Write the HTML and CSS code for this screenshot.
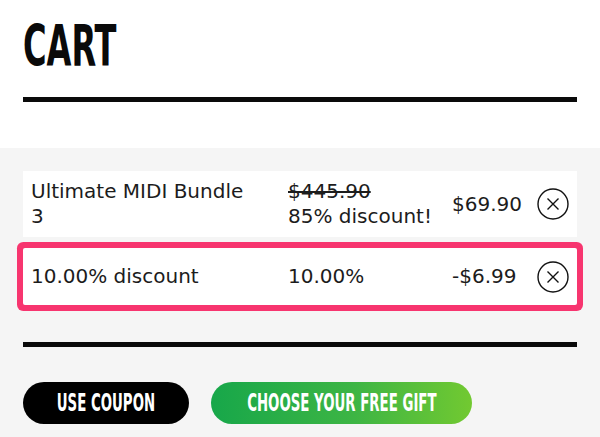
FILE: index.html
```html
<!DOCTYPE html>
<html lang="en">
<head>
<meta charset="utf-8">
<title>Cart</title>
<link rel="stylesheet" href="styles.css">
</head>
<body>
<main class="page">
  <header class="cart-header">
    <h1 class="cart-title"><span class="squeeze">CART</span></h1>
    <div class="rule"></div>
  </header>
  <section class="cart-body">
    <div class="cart-row">
      <div class="cell name">Ultimate MIDI Bundle 3</div>
      <div class="cell info">
        <span class="old-price">$445.90</span>
        <span class="note">85% discount!</span>
      </div>
      <div class="cell price">$69.90</div>
      <button class="remove" aria-label="Remove">
        <svg viewBox="0 0 32 32" width="32" height="32"><circle cx="16" cy="16" r="15" fill="none" stroke="#111" stroke-width="1.4"/><path d="M10.5 10.5 L21.5 21.5 M21.5 10.5 L10.5 21.5" stroke="#111" stroke-width="1.4" fill="none"/></svg>
      </button>
    </div>
    <div class="cart-row highlighted">
      <div class="cell name">10.00% discount</div>
      <div class="cell info">10.00%</div>
      <div class="cell price">-$6.99</div>
      <button class="remove" aria-label="Remove">
        <svg viewBox="0 0 32 32" width="32" height="32"><circle cx="16" cy="16" r="15" fill="none" stroke="#111" stroke-width="1.4"/><path d="M10.5 10.5 L21.5 21.5 M21.5 10.5 L10.5 21.5" stroke="#111" stroke-width="1.4" fill="none"/></svg>
      </button>
    </div>
    <div class="rule rule-bottom"></div>
    <div class="actions">
      <button class="btn btn-dark"><span class="squeeze">USE COUPON</span></button>
      <button class="btn btn-green"><span class="squeeze">CHOOSE YOUR FREE GIFT</span></button>
    </div>
  </section>
</main>
</body>
</html>
```

FILE: styles.css
```css
* { box-sizing: border-box; }
html, body { margin: 0; padding: 0; background: #fff; }
body {
  font-family: "DejaVu Sans", sans-serif;
  color: #1c1c1c;
  width: 600px;
  height: 437px;
  overflow: hidden;
}
.page { display: flex; flex-direction: column; min-height: 437px; }
.cart-header { padding: 18px 23px 46px; }
.cart-title {
  margin: 0;
  height: 58px;
  font-family: "DejaVu Sans Condensed", "DejaVu Sans", sans-serif;
  font-stretch: condensed;
  font-weight: bold;
  font-size: 57.6px;
  line-height: 58px;
  color: #0a0a0a;
}
.cart-title .squeeze { display: inline-block; transform: scaleX(0.62); transform-origin: left center; }
.rule { height: 5px; background: #0a0a0a; margin-top: 21px; }
.cart-body {
  flex: 1;
  background: #f5f5f5;
  padding: 23px 23px 14px;
}
.cart-row {
  display: grid;
  grid-template-columns: 257px 164px 85px 32px;
  align-items: center;
  min-height: 57px;
  padding: 8px;
  background: #fff;
  font-size: 20px;
  line-height: 25px;
}
.cart-row.highlighted {
  margin-top: 11px;
  border-radius: 2px;
  box-shadow: 0 0 0 6px #f7356f;
}
.cell.name { padding-right: 35px; }
.info .old-price { display: block; text-decoration: line-through; }
.info .note { display: block; }
.remove {
  width: 32px; height: 32px; padding: 0; border: 0; background: none;
  display: flex; align-items: center; justify-content: center;
}
.remove svg { display: block; }
.rule-bottom { margin-top: 37px; }
.actions { display: flex; gap: 22px; margin-top: 35px; }
.btn {
  height: 42px;
  border: 0;
  border-radius: 21px;
  padding: 0;
  display: flex; align-items: center; justify-content: center;
  color: #fff;
  font-family: "DejaVu Sans Condensed", "DejaVu Sans", sans-serif;
  font-stretch: condensed;
  font-weight: bold;
  font-size: 24.7px;
  line-height: 42px;
  overflow: hidden;
  white-space: nowrap;
}
.btn .squeeze { display: inline-block; transform: scaleX(0.6); transform-origin: center; }
.btn-dark { width: 166px; background: #000; }
.btn-green { width: 261px; background: linear-gradient(90deg, #17a74a 0%, #3db544 55%, #72c931 100%); }
```
